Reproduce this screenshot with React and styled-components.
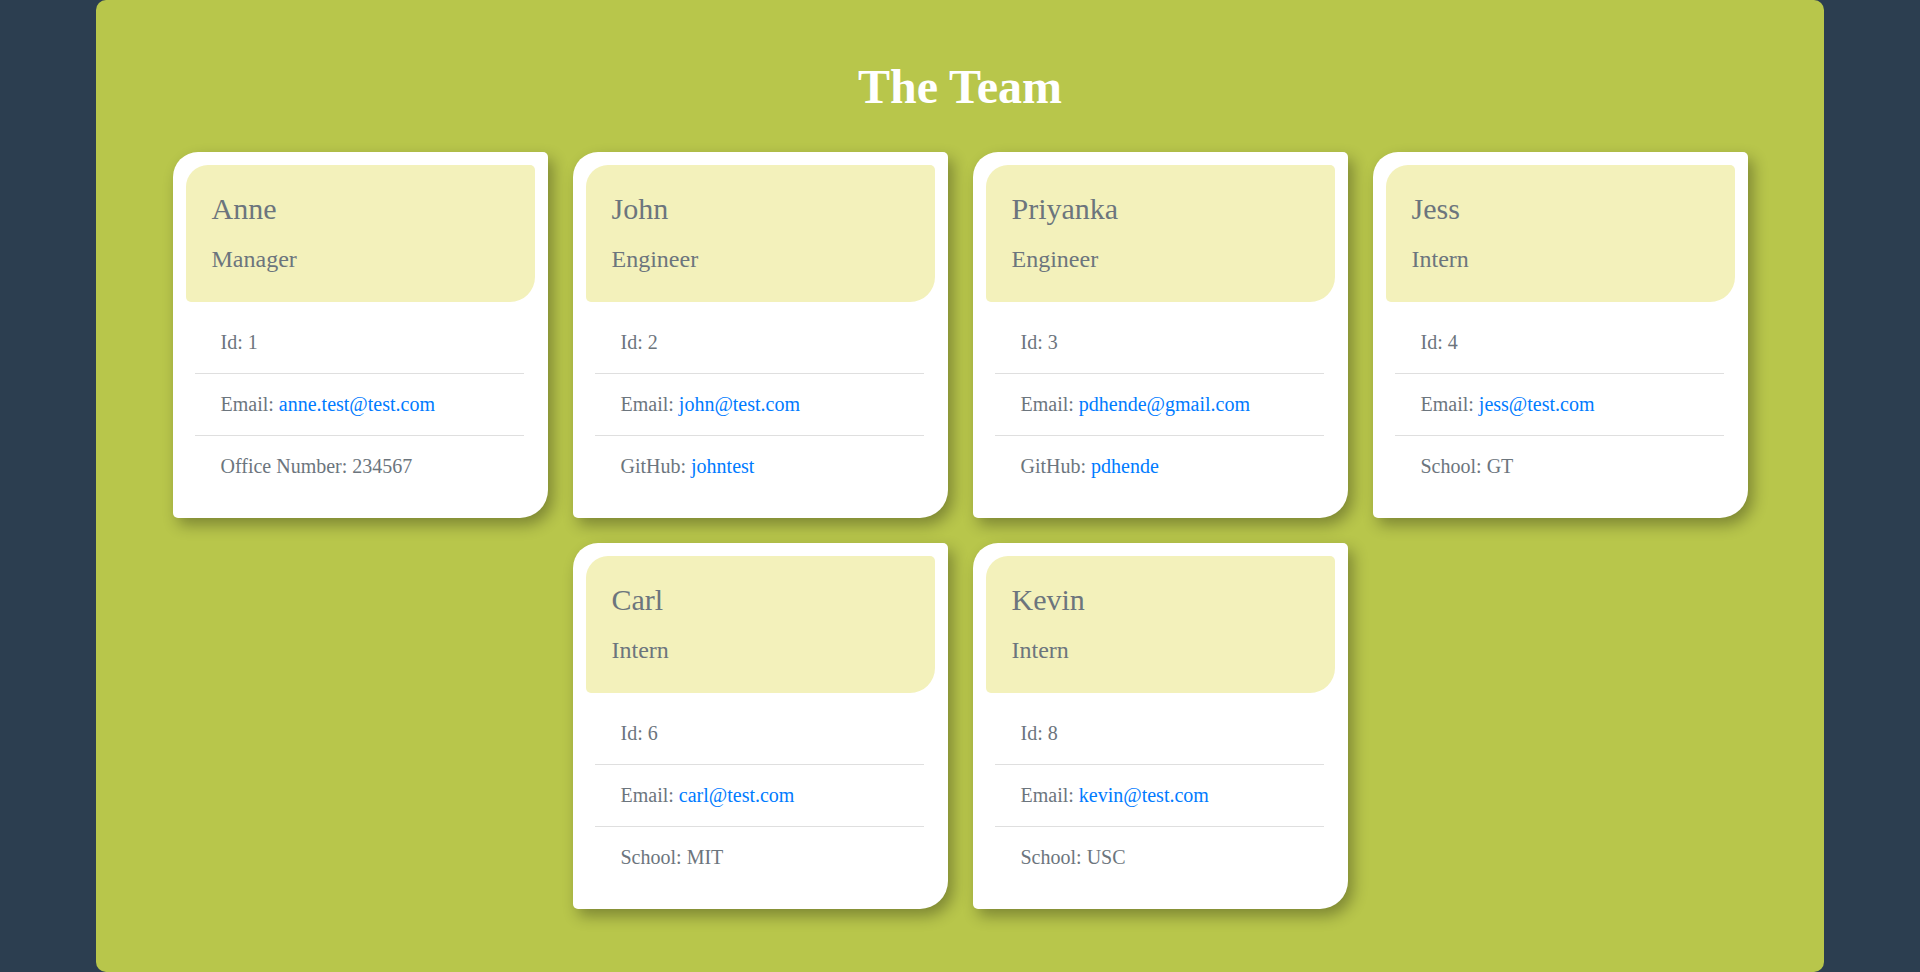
import styled, { createGlobalStyle } from 'styled-components'

const GlobalStyle = createGlobalStyle`
    html, body {
        margin: 0;
        padding: 0;
        background-color: #2c3e50;
        font-family: 'Liberation Serif', 'Times New Roman', serif;
    }
`

const Page = styled.main`
    width: 90%;
    margin: 0 auto;
    min-height: 972px;
    box-sizing: border-box;
    background-color: #b8c64b;
    border-radius: 10px;
    padding: 55px 0 40px;
`

const Title = styled.h1`
    margin: 0 0 33px;
    text-align: center;
    color: white;
    font-size: 48px;
    line-height: 64px;
    font-weight: bold;
`

const CardGrid = styled.div`
    display: flex;
    flex-wrap: wrap;
    justify-content: center;
    gap: 25px;
`

const Card = styled.section`
    width: 375px;
    box-sizing: border-box;
    padding: 13px 13px 21px 13px;
    background-color: white;
    border-radius: 25px 5px 28px 5px;
    box-shadow: 5px 7px 15px rgba(0, 0, 0, 0.32);
    color: #6c757d;
`

const CardHeader = styled.header`
    padding: 26px 26px 28px;
    background-color: #f3f1bb;
    border-radius: 22px 5px 25px 5px;
`

const Name = styled.h2`
    margin: 0 0 18px;
    font-size: 30px;
    line-height: 36px;
    font-weight: normal;
`

const Role = styled.h3`
    margin: 0;
    font-size: 24px;
    line-height: 29px;
    font-weight: normal;
`

const InfoList = styled.ul`
    list-style: none;
    margin: 10px 11px 0 9px;
    padding: 0;
`

const InfoItem = styled.li`
    padding: 16px 26px;
    font-size: 20px;
    line-height: 29px;
    border-bottom: 1px solid #dfdfdf;

    &:last-child {
        border-bottom: none;
    }
`

const Link = styled.a`
    color: #007bff;
    text-decoration: none;
`

const team = [
    { name: 'Anne', role: 'Manager', id: 1, email: 'anne.test@test.com', extra: { label: 'Office Number', value: '234567' } },
    { name: 'John', role: 'Engineer', id: 2, email: 'john@test.com', extra: { label: 'GitHub', value: 'johntest', link: true } },
    { name: 'Priyanka', role: 'Engineer', id: 3, email: 'pdhende@gmail.com', extra: { label: 'GitHub', value: 'pdhende', link: true } },
    { name: 'Jess', role: 'Intern', id: 4, email: 'jess@test.com', extra: { label: 'School', value: 'GT' } },
    { name: 'Carl', role: 'Intern', id: 6, email: 'carl@test.com', extra: { label: 'School', value: 'MIT' } },
    { name: 'Kevin', role: 'Intern', id: 8, email: 'kevin@test.com', extra: { label: 'School', value: 'USC' } },
]

function EmployeeCard({ member }) {
    const { extra } = member
    return (
        <Card>
            <CardHeader>
                <Name>{member.name}</Name>
                <Role>{member.role}</Role>
            </CardHeader>
            <InfoList>
                <InfoItem>Id: {member.id}</InfoItem>
                <InfoItem>
                    Email: <Link href={`mailto:${member.email}`}>{member.email}</Link>
                </InfoItem>
                <InfoItem>
                    {extra.label}:{' '}
                    {extra.link
                        ? <Link href={`https://github.com/${extra.value}`}>{extra.value}</Link>
                        : extra.value}
                </InfoItem>
            </InfoList>
        </Card>
    )
}

export default function App() {
    return (
        <>
            <GlobalStyle />
            <Page>
                <Title>The Team</Title>
                <CardGrid>
                    {team.map((member) => (
                        <EmployeeCard key={member.id} member={member} />
                    ))}
                </CardGrid>
            </Page>
        </>
    )
}
